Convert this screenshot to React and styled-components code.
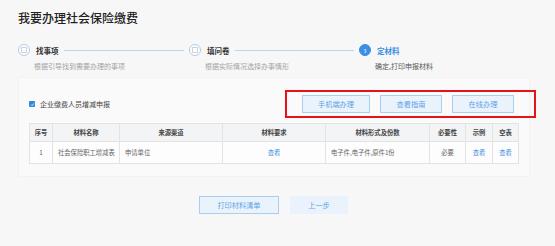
import React from "react";
import styled, { createGlobalStyle } from "styled-components";

const GlobalStyle = createGlobalStyle`
  body {
    margin: 0;
    background: #f7f7f7;
    font-family: "Noto Sans CJK SC", "Noto Sans", sans-serif;
  }
`;

const Page = styled.div`
  width: 555px;
  height: 246px;
  padding-top: 11px;
  box-sizing: border-box;
  overflow: hidden;
`;

const Title = styled.h1`
  margin: 0 0 0 18px;
  font-size: 12px;
  line-height: 14px;
  font-weight: 500;
  color: #222;
`;

const Steps = styled.div`
  display: flex;
  margin: 19px 0 0 18px;
`;

const Step = styled.div`
  display: flex;
  flex-direction: column;
  width: ${p => (p.$w ? p.$w + "px" : "auto")};
`;

const StepHead = styled.div`
  display: flex;
  align-items: center;
  height: 12px;
`;

const Circle = styled.span`
  width: 12px;
  height: 12px;
  box-sizing: border-box;
  border-radius: 50%;
  border: 1px solid ${p => (p.$active ? "#3a8ee6" : "#a9cdef")};
  background: ${p => (p.$active ? "#3a8ee6" : "#fff")};
  color: #fff;
  font-size: 5px;
  display: flex;
  align-items: center;
  justify-content: center;
  flex-shrink: 0;
`;

const Square = styled.span`
  width: 4px;
  height: 4px;
  border: 1px solid #d2d2d2;
`;

const StepLabel = styled.span`
  margin-left: 6px;
  font-size: 7.5px;
  font-weight: bold;
  color: ${p => (p.$active ? "#3a8ee6" : "#333")};
  white-space: nowrap;
`;

const Line = styled.span`
  flex: 1;
  height: 1px;
  background: #b9d6f2;
  margin: 0 5px;
`;

const StepDesc = styled.div`
  margin-top: 5px;
  padding-left: 16px;
  font-size: 7px;
  line-height: 10px;
  color: ${p => (p.$dark ? "#555" : "#a3a3a3")};
  white-space: nowrap;
`;

const Panel = styled.div`
  margin: 6px 25px 0 18px;
  padding: 12px 0 12px 10px;
  background: #fafafa;
  border: 1px solid #f2f2f2;
`;

const Toolbar = styled.div`
  display: flex;
  align-items: center;
  justify-content: space-between;
  height: 28px;
  margin-right: -7px;
`;

const CheckRow = styled.label`
  display: flex;
  align-items: center;
  gap: 5px;
  font-size: 7px;
  color: #444;
`;

const Box = styled.span`
  width: 6px;
  height: 6px;
  border-radius: 1px;
  background: #2f86e0;
  display: flex;
  align-items: center;
  justify-content: center;
`;

const RedBox = styled.div`
  display: flex;
  align-items: center;
  gap: 10px;
  height: 28px;
  box-sizing: border-box;
  padding: 0 20px 0 15px;
  border: 2px solid #e5121a;
`;

const Button = styled.button`
  width: ${p => p.$w}px;
  height: 18px;
  padding: 0;
  box-sizing: border-box;
  border: 1px solid ${p => (p.$plain ? "#eaf3fb" : "#a8cff1")};
  background: #eaf3fb;
  color: #5ba3e8;
  font-family: inherit;
  font-size: 7.2px;
`;

const Table = styled.table`
  margin-top: 5px;
  width: 489px;
  border-collapse: collapse;
  table-layout: fixed;
  font-size: 6.3px;
`;

const Th = styled.th`
  height: 17px;
  padding: 0;
  background: #f3f4f6;
  border: 1px solid #e3e3e3;
  color: #444;
  font-weight: bold;
`;

const Td = styled.td`
  height: 21px;
  padding: 0 ${p => (p.$left ? "5px" : "0")};
  background: #fdfdfd;
  border: 1px solid #e3e3e3;
  color: ${p => (p.$link ? "#3d8fe0" : "#666")};
  text-align: ${p => (p.$left ? "left" : "center")};
  white-space: nowrap;
`;

const Footer = styled.div`
  display: flex;
  gap: 11px;
  margin: 19px 0 0 199px;
`;

const columns = [
  { name: "序号", w: 23 },
  { name: "材料名称", w: 67 },
  { name: "来源渠道", w: 103 },
  { name: "材料要求", w: 103 },
  { name: "材料形式及份数", w: 104 },
  { name: "必要性", w: 36 },
  { name: "示例", w: 27 },
  { name: "空表", w: 26 },
];

export default function App() {
  return (
    <Page>
      <GlobalStyle />
      <Title>我要办理社会保险缴费</Title>
      <Steps>
        <Step $w={171}>
          <StepHead>
            <Circle><Square /></Circle>
            <StepLabel>找事项</StepLabel>
            <Line />
          </StepHead>
          <StepDesc>根据引导找到需要办理的事项</StepDesc>
        </Step>
        <Step $w={170}>
          <StepHead>
            <Circle><Square /></Circle>
            <StepLabel>填问卷</StepLabel>
            <Line />
          </StepHead>
          <StepDesc>根据实际情况选择办事情形</StepDesc>
        </Step>
        <Step>
          <StepHead>
            <Circle $active>3</Circle>
            <StepLabel $active>定材料</StepLabel>
          </StepHead>
          <StepDesc $dark>确定,打印申报材料</StepDesc>
        </Step>
      </Steps>

      <Panel>
        <Toolbar>
          <CheckRow>
            <Box>
              <svg width="5" height="5" viewBox="0 0 10 10">
                <path d="M2 5.2 L4.2 7.4 L8 2.8" fill="none" stroke="#fff" strokeWidth="1.6" />
              </svg>
            </Box>
            企业缴费人员增减申报
          </CheckRow>
          <RedBox>
            <Button $w={68}>手机端办理</Button>
            <Button $w={62}>查看指南</Button>
            <Button $w={62}>在线办理</Button>
          </RedBox>
        </Toolbar>
        <Table>
          <colgroup>
            {columns.map(c => <col key={c.name} style={{ width: c.w }} />)}
          </colgroup>
          <thead>
            <tr>
              {columns.map(c => <Th key={c.name}>{c.name}</Th>)}
            </tr>
          </thead>
          <tbody>
            <tr>
              <Td>1</Td>
              <Td $left>社会保险职工增减表</Td>
              <Td $left>申请单位</Td>
              <Td $link>查看</Td>
              <Td $left>电子件,电子件,原件1份</Td>
              <Td>必要</Td>
              <Td $link>查看</Td>
              <Td $link>查看</Td>
            </tr>
          </tbody>
        </Table>
      </Panel>

      <Footer>
        <Button $w={80}>打印材料清单</Button>
        <Button $w={58} $plain>上一步</Button>
      </Footer>
    </Page>
  );
}
